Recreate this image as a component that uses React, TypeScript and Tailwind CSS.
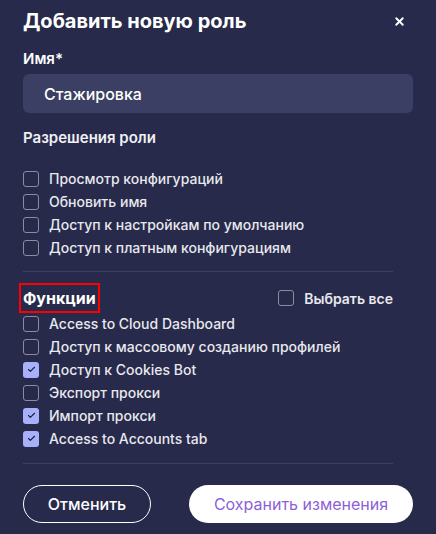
import { X, Check } from 'lucide-react';

const permissions = [
    { label: 'Просмотр конфигураций', checked: false },
    { label: 'Обновить имя', checked: false },
    { label: 'Доступ к настройкам по умолчанию', checked: false },
    { label: 'Доступ к платным конфигурациям', checked: false },
];

const features = [
    { label: 'Access to Cloud Dashboard', checked: false },
    { label: 'Доступ к массовому созданию профилей', checked: false },
    { label: 'Доступ к Cookies Bot', checked: true },
    { label: 'Экспорт прокси', checked: false },
    { label: 'Импорт прокси', checked: true },
    { label: 'Access to Accounts tab', checked: true },
];

const Box = ({ checked }: { checked: boolean }) =>
    checked ? (
        <span className="w-[16px] h-[16px] rounded-[3px] bg-[#a7b1fb] flex items-center justify-center shrink-0">
            <Check className="w-[9px] h-[9px] text-[#1c1e33]" strokeWidth={3} />
        </span>
    ) : (
        <span className="w-[16px] h-[16px] rounded-[3px] border-[1.5px] border-[#8c8d9c] shrink-0" />
    );

const Row = ({ label, checked }: { label: string; checked: boolean }) => (
    <div className="h-[23px] flex items-center gap-[10px]">
        <Box checked={checked} />
        <span className="text-[14px] font-medium text-[#e8e8ee]">{label}</span>
    </div>
);

export default function App() {
    return (
        <div
            className="w-[436px] h-[534px] bg-[#272a4a] px-[23px] pt-[7px] flex flex-col"
            style={{ fontFamily: 'Inter, "Noto Sans", sans-serif' }}
        >
            {/* Header */}
            <div className="h-[28px] flex items-center justify-between">
                <h1 className="text-[20px] font-bold text-white leading-[28px]">Добавить новую роль</h1>
                <X className="w-[13px] h-[13px] text-white mr-[7px]" strokeWidth={3.5} />
            </div>

            <label className="mt-[14px] text-[15px] font-semibold text-white leading-[20px]">Имя*</label>
            <div className="mt-[5px] h-[39px] rounded-[6px] bg-[#3b3f63] flex items-center px-[21px]">
                <span className="text-[16px] font-medium text-white">Стажировка</span>
            </div>

            <div className="mt-[15px] text-[15px] font-semibold text-[#f0f0f4] leading-[20px]">Разрешения роли</div>
            <div className="mt-[19px] flex flex-col">
                {permissions.map((p) => (
                    <Row key={p.label} {...p} />
                ))}
            </div>

            <div className="mt-[12px] h-px bg-[#37426a] mr-[20px]" />

            {/* Features */}
            <div className="mt-[11px] h-[30px] flex items-center justify-between">
                <span className="-ml-[4px] border-2 border-[#ff0000] px-[2px] h-[30px] flex items-center text-[16px] font-bold text-white">
                    Функции
                </span>
                <div className="flex items-center gap-[10px] mr-[20px]">
                    <Box checked={false} />
                    <span className="text-[14px] font-semibold text-[#e8e8ee]">Выбрать все</span>
                </div>
            </div>
            <div className="-mt-[1px] flex flex-col">
                {features.map((f) => (
                    <Row key={f.label} {...f} />
                ))}
            </div>

            <div className="mt-[13px] h-px bg-[#37426a] mr-[20px]" />

            {/* Actions */}
            <div className="mt-[21px] flex items-center gap-[38px]">
                <button className="w-[128px] h-[38px] rounded-full border border-white text-white text-[16px] font-medium">
                    Отменить
                </button>
                <button className="flex-1 h-[38px] rounded-full bg-white text-[#8d5fd8] text-[16px]">
                    Сохранить изменения
                </button>
            </div>
        </div>
    );
}
